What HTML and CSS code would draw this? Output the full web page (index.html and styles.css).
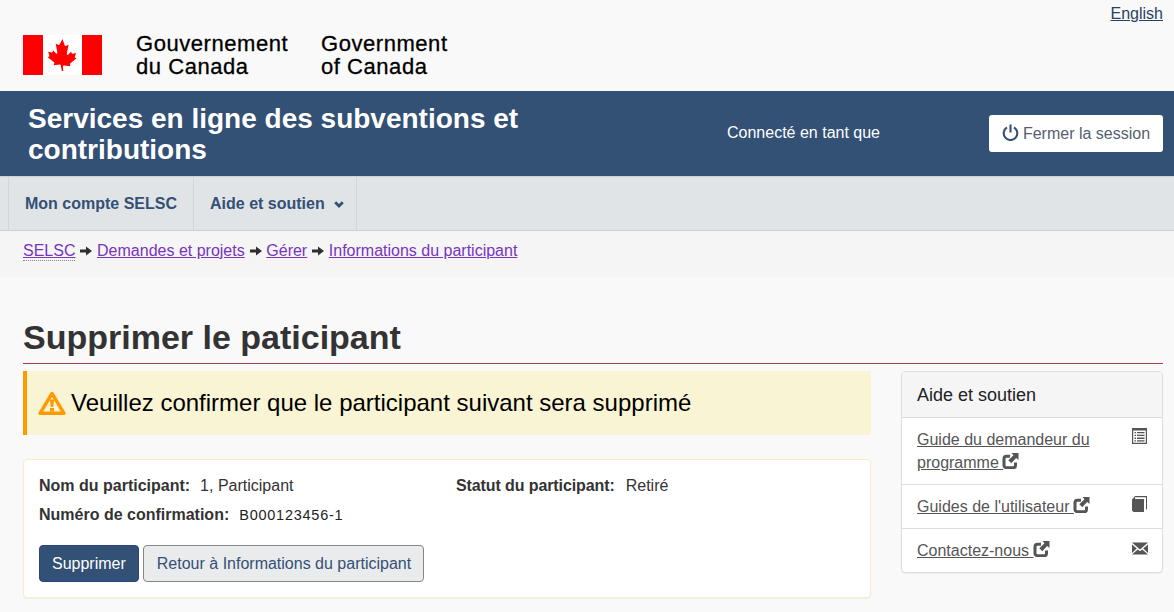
FILE: index.html
```html
<!DOCTYPE html>
<html lang="fr">
<head>
    <meta charset="UTF-8" />
    <meta name="viewport" content="width=device-width, initial-scale=1.0"/>
    <title>Supprimer le paticipant</title>
    <link rel="stylesheet" href="styles.css">
</head>
<body>
    <svg class="sprites" width="0" height="0">
        <symbol id="ext" viewBox="0 0 16 16">
            <path d="M7.500 3.300H4A2.500 2.500 0 0 0 1.500 5.800v6.700a2.200 2.200 0 0 0 2.200 2.200h7.100a2.200 2.200 0 0 0 2.200-2.200V9.500" fill="none" stroke="currentColor" stroke-width="3"/>
            <path d="M9 0H16V7L13.700 4.900 8.800 10.200 5.800 7.200 11 2.300Z" fill="currentColor"/>
        </symbol>
        <symbol id="arrow" viewBox="0 0 12 10">
            <path d="M0 3.500H6V0.500L12 5 6 9.500V6.500H0Z" fill="currentColor"/>
        </symbol>
    </svg>

    <header class="site-head">
        <div class="lang"><a href="#">English</a></div>
        <div class="brand">
            <svg class="flag" viewBox="0 0 79 40">
                <rect width="79" height="40" fill="#fff"/>
                <rect width="20" height="40" fill="#f00"/>
                <rect x="59" width="20" height="40" fill="#f00"/>
                <path fill="#f00" d="M39.500 4l-3 5.500c-.4.600-1 .5-1.600.2l-2.200-1.100 1.600 8.600c.3 1.600-.7 2-1.500 1.100l-2.700-3-.5 1.800c-.1.300-.4.500-.8.500l-3.600-.8 1 3.500c.2.800.4 1.100-.2 1.300l-1.300.6 6.300 5.100c.3.200.4.600.3 1l-.6 1.900 6.300-.7c.5 0 .8.200.8.700L38.800 36h1.400l-.3-4.700c0-.5.800-.7 1.300-.7l6.300.7-.6-1.900c-.1-.4 0-.8.300-1l6.300-5.100-1.300-.6c-.6-.2-.4-.5-.2-1.300l1-3.500-3.600.8c-.4 0-.7-.2-.8-.5l-.5-1.800-2.700 3c-.8.900-1.800.5-1.500-1.100l1.600-8.600-2.200 1.100c-.6.300-1.200.4-1.600-.2z"/>
            </svg>
            <div class="wordmark fr">Gouvernement<br>du Canada</div>
            <div class="wordmark en">Government<br>of Canada</div>
        </div>
    </header>

    <div class="band">
        <div class="app-title">Services en ligne des subventions et contributions</div>
        <div class="signed">Connecté en tant que</div>
        <a class="logout" href="#">
            <svg class="power" viewBox="0 0 17 17"><path d="M5 3.400a6.800 6.800 0 1 0 7 0" fill="none" stroke="#335075" stroke-width="2.100"/><path d="M8.500 0.500V8.500" stroke="#335075" stroke-width="2.100"/></svg>
            Fermer la session
        </a>
    </div>

    <nav class="menu">
        <a class="menu-item" href="#">Mon compte SELSC</a>
        <a class="menu-item" href="#">Aide et soutien
            <svg class="chev" viewBox="0 0 10 7"><path d="M1.200 1.200L5 5l3.800-3.800" fill="none" stroke="#335075" stroke-width="2.800"/></svg>
        </a>
    </nav>

    <div class="crumbs">
        <a class="abbr" href="#">SELSC</a>
        <svg class="sep"><use href="#arrow"/></svg>
        <a href="#">Demandes et projets</a>
        <svg class="sep"><use href="#arrow"/></svg>
        <a href="#">Gérer</a>
        <svg class="sep"><use href="#arrow"/></svg>
        <a href="#">Informations du participant</a>
    </div>

    <main class="content">
        <h1>Supprimer le paticipant</h1>
        <div class="columns">
            <div class="main-col">
                <div class="alert">
                    <svg class="warn" viewBox="0 0 28 24">
                        <path d="M14 2.500L2 22.300H26Z" fill="none" stroke="#ff9900" stroke-width="3.400" stroke-linejoin="round"/>
                        <path d="M11.800 8.500h4.400l-1 7.500h-2.400zM12 17h4v3.500h-4z" fill="#ff9900"/>
                    </svg>
                    Veuillez confirmer que le participant suivant sera supprimé
                </div>
                <section class="card">
                    <div class="fields">
                        <div class="field"><b>Nom du participant:</b><span>1, Participant</span></div>
                        <div class="field status"><b>Statut du participant:</b><span>Retiré</span></div>
                        <div class="field"><b>Numéro de confirmation:</b><span class="code">B000123456-1</span></div>
                    </div>
                    <div class="actions">
                        <a class="btn primary" href="#">Supprimer</a>
                        <a class="btn back" href="#">Retour à Informations du participant</a>
                    </div>
                </section>
            </div>

            <aside class="panel">
                <div class="panel-head">Aide et soutien</div>
                <div class="panel-row">
                    <a href="#">Guide du demandeur du programme <svg class="ext"><use href="#ext"/></svg></a>
                    <svg class="side-icon list" viewBox="0 0 15 16"><path fill="#555" fill-rule="evenodd" d="M0 0h15v16H0zM1.200 2.500v12.300h12.600V2.500z"/><path fill="#555" d="M2.500 4h1.500v1.300H2.500zM5 4h7.500v1.300H5zM2.500 6.800h1.500v1.300H2.500zM5 6.800h7.500v1.300H5zM2.500 9.600h1.500v1.300H2.500zM5 9.600h7.500v1.300H5zM2.500 12.300h1.500v1.300H2.500zM5 12.300h7.500v1.300H5z"/></svg>
                </div>
                <div class="panel-row">
                    <a href="#">Guides de l'utilisateur <svg class="ext"><use href="#ext"/></svg></a>
                    <svg class="side-icon book" viewBox="0 0 15 16"><path fill="#555" d="M0 3.500L2.800 0.500H3V3H12V16H1.500L0 14.500z"/><path fill="#555" d="M2.800 0H15V13.500H14V1.200H2.800z"/></svg>
                </div>
                <div class="panel-row">
                    <a href="#">Contactez-nous <svg class="ext"><use href="#ext"/></svg></a>
                    <svg class="side-icon mail" viewBox="0 0 16 13"><path fill="#555" d="M0 0.500h16L8 7.500zM0 2.500L4.800 6.500 0 11zM16 2.500L11.200 6.500 16 11zM0 12.500L5.800 7.500 8 9.300 10.200 7.500 16 12.500z"/></svg>
                </div>
            </aside>
        </div>
    </main>
</body>
</html>
```

FILE: styles.css
```css
* {
    box-sizing: border-box;
}
html, body {
    margin: 0;
    height: 612px;
    overflow: hidden;
}
body {
    font-family: "Liberation Sans", Arial, sans-serif;
    font-size: 16px;
    background-color: #f9f9f9;
    color: #333;
}
a {
    color: #335075;
}
.sprites {
    position: absolute;
}
.site-head {
    height: 91px;
    padding: 0 11px 0 23px;
}
.lang {
    text-align: right;
    padding-top: 5px;
    height: 35px;
    line-height: 18px;
}
.lang a {
    color: #284162;
}
.brand {
    display: flex;
    align-items: center;
    height: 40px;
}
.flag {
    width: 79px;
    height: 40px;
    background: #f9f9f9;
}
.wordmark {
    font-size: 22px;
    letter-spacing: 0.550px;
    line-height: 23px;
    color: #000;
    -webkit-text-stroke: 0.3px #000;
}
.fr {
    margin-left: 34px;
    width: 185px;
}
.band {
    background-color: #335075;
    height: 85px;
    display: flex;
    align-items: center;
    padding: 0 11px 0 28px;
    color: #fff;
}
.app-title {
    width: 540px;
    font-size: 28px;
    line-height: 31px;
    font-weight: bold;
}
.signed {
    margin-left: 159px;
    margin-top: -1px;
    flex: 1;
}
.logout {
    background: #fff;
    height: 37px;
    width: 174px;
    border-radius: 3px;
    display: flex;
    align-items: center;
    justify-content: center;
    gap: 4px;
    color: #555e70;
    text-decoration: none;
}
.power {
    width: 17px;
    height: 17px;
    margin-top: -2px;
}
.menu {
    height: 55px;
    background-color: #e1e4e7;
    border-top: 1px solid #ccd0d4;
    border-bottom: 1px solid #ccd0d4;
    padding-left: 8px;
    display: flex;
}
.menu-item {
    display: flex;
    align-items: center;
    gap: 9px;
    padding: 0 16px;
    border-left: 1px solid #d3d6d9;
    font-weight: bold;
    text-decoration: none;
    color: #335075;
}
.menu-item:last-child {
    border-right: 1px solid #d3d6d9;
    padding-right: 12px;
}
.chev {
    width: 10px;
    height: 7px;
    margin-top: 1px;
}
.crumbs {
    height: 46px;
    background-color: #f5f5f5;
    padding: 11px 23px 0;
    line-height: 18px;
    display: flex;
    gap: 4.800px;
}
.crumbs a {
    color: #7834bc;
}
.crumbs .abbr {
    height: 19px;
    border-bottom: 1px dotted #888;
}
.sep {
    width: 12px;
    height: 10px;
    margin-top: 4px;
    color: #2e2e2e;
}
.content {
    padding: 0 11px 0 23px;
}
h1 {
    margin: 41px 0 0;
    font-size: 34px;
    line-height: 39px;
    height: 46px;
    border-bottom: 1px solid #a23f46;
    color: #333;
}
.columns {
    display: flex;
    justify-content: space-between;
    margin-top: 7px;
    align-items: flex-start;
}
.main-col {
    width: 848px;
}
.alert {
    height: 64px;
    background-color: #f9f4d4;
    border-left: 4px solid #ff9900;
    display: flex;
    align-items: center;
    padding-left: 11px;
    gap: 5px;
    font-size: 24px;
    color: #000;
}
.warn {
    width: 28px;
    height: 24px;
}
.card {
    margin-top: 24px;
    height: 139px;
    background: #fff;
    border: 1px solid #faebcc;
    border-radius: 4px;
    padding: 15px;
    box-shadow: 0 1px 1px rgba(0,0,0,0.05);
}
.fields {
    display: grid;
    grid-template-columns: 417px 1fr;
    row-gap: 11px;
    line-height: 18px;
    margin-top: 2px;
}
.field b {
    margin-right: 10px;
}
.status b {
    letter-spacing: -0.100px;
    margin-right: 11px;
}
.code {
    letter-spacing: 0.750px;
    font-size: 14.500px;
    color: #222;
}
.actions {
    display: flex;
    gap: 4px;
    margin-top: 21px;
}
.btn {
    display: block;
    height: 37px;
    line-height: 35px;
    padding: 0 12px;
    background: #eaebed;
    border: 1px solid #868686;
    border-radius: 4px;
    text-decoration: none;
    color: #335075;
}
.back {
    padding-left: 13px;
}
.primary {
    background: #335075;
    border-color: #2b4380;
    color: #fff;
}
.panel {
    width: 262px;
    background: #fff;
    border: 1px solid #ddd;
    border-radius: 4px;
    box-shadow: 0 1px 1px rgba(0,0,0,0.05);
}
.panel-head {
    height: 46px;
    background: #f5f5f5;
    padding: 14px 15px 0;
    font-size: 18px;
    line-height: 18px;
    color: #222;
    border-bottom: 1px solid #ddd;
}
.panel-row {
    display: flex;
    justify-content: space-between;
    padding: 10px 15px;
    line-height: 23px;
    border-top: 1px solid #ddd;
}
.panel-head + .panel-row {
    border-top: 0;
}
.panel-row a {
    color: #555;
    width: 190px;
}
.ext {
    width: 17px;
    height: 16px;
    margin-left: -1px;
    vertical-align: -1px;
    color: #555;
}
.side-icon {
    width: 15px;
    height: 16px;
    flex: none;
}
.book {
    margin-top: 1px;
}
.mail {
    width: 16px;
    height: 13px;
    margin-top: 3px;
    margin-right: -1px;
}
```
